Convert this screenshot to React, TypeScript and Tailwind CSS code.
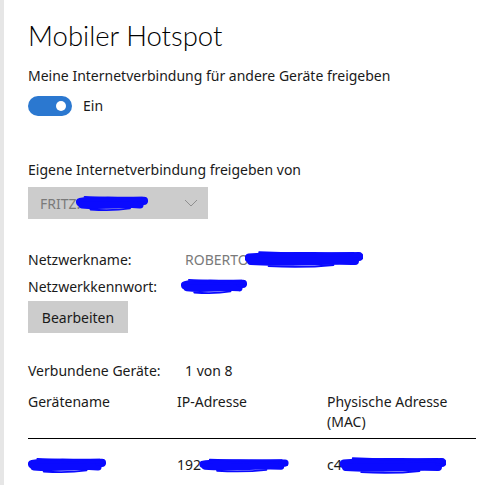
import React from "react";

const FONT = { fontFamily: '"Noto Sans", "Open Sans", sans-serif' };
const TITLE_FONT = { fontFamily: 'Lato, "Noto Sans", sans-serif' };

interface ScribbleProps {
  width: number;
  height: number;
  className?: string;
}

// blue marker scribble used to hide private values
function Scribble({ width, height, className }: ScribbleProps) {
  const h = height;
  const w = width;
  return (
    <svg
      width={w}
      height={h}
      viewBox={`0 0 ${w} ${h}`}
      className={className}
      fill="none"
      stroke="#0a0aff"
      strokeLinecap="round"
      strokeLinejoin="round"
    >
      <path
        d={`M4 ${h * 0.45} C ${w * 0.25} ${h * 0.3}, ${w * 0.55} ${h * 0.4}, ${w - 4} ${h * 0.38}`}
        strokeWidth={h * 0.45}
      />
      <path
        d={`M6 ${h * 0.6} C ${w * 0.35} ${h * 0.72}, ${w * 0.7} ${h * 0.52}, ${w - 8} ${h * 0.6}`}
        strokeWidth={h * 0.4}
      />
      <path
        d={`M${w * 0.12} ${h * 0.16} L ${w * 0.55} ${h * 0.24} L ${w * 0.92} ${h * 0.2} M${w * 0.2} ${h * 0.86} Q ${w * 0.5} ${h * 0.96} ${w * 0.75} ${h * 0.8} M${w - 10} ${h * 0.45} L ${w - 2} ${h * 0.5}`}
        strokeWidth={1.8}
      />
    </svg>
  );
}

function Toggle() {
  return (
    <div className="relative h-5 w-11 rounded-full bg-[#2b78d0]">
      <div className="absolute right-[6px] top-[5px] size-[10px] rounded-full bg-white" />
    </div>
  );
}

export default function App() {
  return (
    <div
      className="flex h-[485px] w-[482px] overflow-hidden bg-white text-[14px] text-[#1a1a1a]"
      style={FONT}
    >
      <div className="w-1 shrink-0 bg-[#e6e6e6]" />
      <div className="flex flex-1 flex-col pl-6 pr-[6px]">
        <h1
          className="mt-[18px] text-[27.5px] font-light leading-9 text-black"
          style={TITLE_FONT}
        >
          Mobiler Hotspot
        </h1>
        <p className="mt-[12px] leading-5">
          Meine Internetverbindung für andere Geräte freigeben
        </p>
        <div className="mt-[10px] flex items-center gap-[11px]">
          <Toggle />
          <span className="leading-5">Ein</span>
        </div>

        <p className="mt-[44px] leading-5">Eigene Internetverbindung freigeben von</p>
        <div className="mt-[7px] flex h-8 w-[180px] items-center justify-between bg-[#cccccc] pl-3 pr-[10px]">
          <div className="flex items-center">
            <span className="text-[#7a7a7a]">FRITZ!</span>
            <Scribble width={72} height={18} className="-ml-[4px]" />
          </div>
          <svg width="14" height="8" viewBox="0 0 14 8" fill="none" stroke="#8f8f8f" strokeWidth="1">
            <path d="M1 1l6 6 6-6" />
          </svg>
        </div>

        <div className="mt-[28px] flex h-[24px] items-center">
          <span className="w-[157px]">Netzwerkname:</span>
          <span className="text-[#7a7a7a]">ROBERTO</span>
          <Scribble width={118} height={20} className="-ml-[4px]" />
        </div>
        <div className="mt-[3px] flex h-[24px] items-center">
          <span className="w-[153px]">Netzwerkkennwort:</span>
          <Scribble width={66} height={18} />
        </div>
        <button className="mt-[3px] h-8 w-[100px] bg-[#cccccc] text-center">
          Bearbeiten
        </button>

        <div className="mt-[28px] flex leading-5">
          <span className="w-[157px]">Verbundene Geräte:</span>
          <span>1 von 8</span>
        </div>
        <div className="mt-[11px] grid grid-cols-[149px_150px_1fr] border-b border-black pb-[6px] leading-5">
          <span>Gerätename</span>
          <span>IP-Adresse</span>
          <span>
            Physische Adresse
            <br />
            (MAC)
          </span>
        </div>
        <div className="mt-[16px] grid grid-cols-[149px_150px_1fr] items-center leading-5">
          <Scribble width={78} height={18} />
          <div className="flex items-center">
            <span>192</span>
            <Scribble width={90} height={16} className="-ml-[2px]" />
          </div>
          <div className="flex items-center">
            <span>c4</span>
            <Scribble width={106} height={20} className="-ml-[2px]" />
          </div>
        </div>
      </div>
    </div>
  );
}
